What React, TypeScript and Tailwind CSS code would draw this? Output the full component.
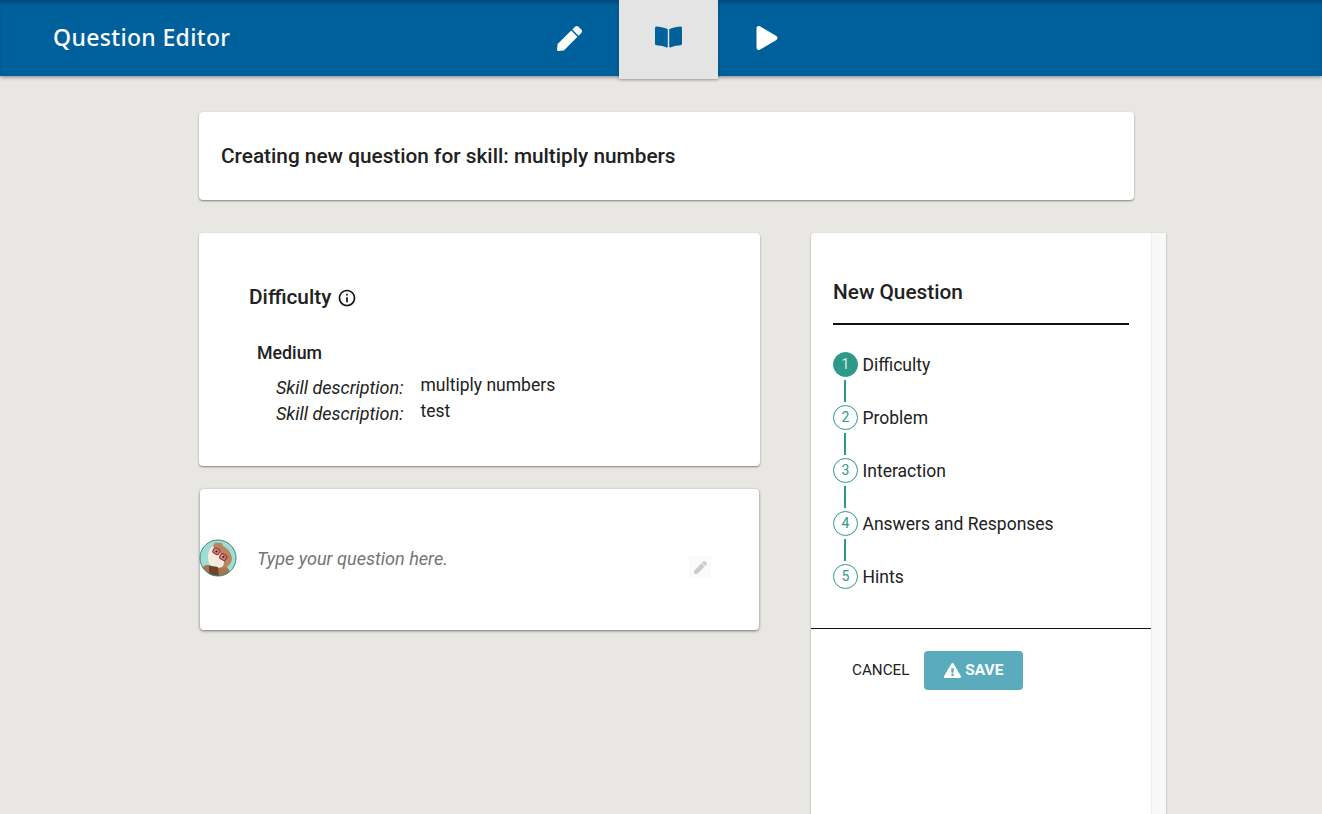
import React from "react";
import { FaPen, FaBookOpen, FaPlay, FaExclamationTriangle } from "react-icons/fa";
import { MdInfoOutline } from "react-icons/md";

const steps = ["Difficulty", "Problem", "Interaction", "Answers and Responses", "Hints"];

function Avatar() {
  return (
    <svg viewBox="0 0 38 38" className="absolute left-[-1px] top-[50px] w-[38px] h-[38px]">
      <defs>
        <clipPath id="c"><circle cx="19" cy="19" r="18" /></clipPath>
      </defs>
      <circle cx="19" cy="19" r="18" fill="#a3dcd2" />
      <g clipPath="url(#c)">
        <path d="M2 38 L3 29 C5 26 9 25 12 27 L26 27 C30 29 32 33 30 38 Z" fill="#a8734d" />
        <path d="M14 7 L16 3.5 L23 4 L24 7 C29 9 33 15 33 20 C32 26 28 29 23 29 L14 22 Z" fill="#b88660" />
        <path d="M13 8 C17 7 20 11 22 15 C25 19 26 23 24 27 C21 30 14 30 11 26 C8 21 8 12 13 8 Z" fill="#f5ebdf" />
        <path d="M10 26.5 L19 28 L20 38 L10 38 Z" fill="#6f4529" />
        <rect x="14" y="9.5" width="6.5" height="5.5" rx="1.5" fill="#c99a72" stroke="#a32a42" strokeWidth="1.2" transform="rotate(30 17.5 12.5)" />
        <rect x="21" y="15.5" width="6.5" height="5.5" rx="1.5" fill="#c99a72" stroke="#a32a42" strokeWidth="1.2" transform="rotate(30 24.5 18)" />
        <circle cx="17.5" cy="12.5" r="1.1" fill="#1d1d1d" />
        <circle cx="24.5" cy="18" r="1.1" fill="#1d1d1d" />
      </g>
      <circle cx="19" cy="19" r="18" fill="none" stroke="#2f8f83" strokeWidth="1" />
    </svg>
  );
}

export default function App() {
  return (
    <div className="h-[814px] overflow-hidden bg-[#e8e7e3] font-['Roboto',sans-serif] text-[#212121]">
      <header className="relative z-10 h-[76px] bg-[#00609c] shadow-[0_1px_4px_rgba(0,0,0,0.45),inset_0_4px_4px_-2px_rgba(0,0,0,0.3)] flex">
        <div className="w-[520px] pl-[53px] pt-[21px] font-['Noto_Sans',sans-serif] font-medium text-[23px] leading-[32px] tracking-[0.35px] text-white">
          Question Editor
        </div>
        <div className="w-[99px] flex items-center justify-center text-white">
          <FaPen className="w-[25px] h-[25px]" />
        </div>
        <div className="w-[99px] h-[79px] bg-[#e4e4e4] flex items-center justify-center pb-[5px] text-[#00609c] shadow-[0_1px_3px_rgba(0,0,0,0.3)]">
          <FaBookOpen className="w-[29px] h-[24px]" />
        </div>
        <div className="w-[99px] pr-[2px] flex items-center justify-center text-white">
          <FaPlay className="w-[24px] h-[24px]" />
        </div>
      </header>

      <main className="pl-[199px] pt-[36px]">
        <section className="w-[935px] h-[88px] bg-white rounded-[4px] shadow-[0_1px_2px_rgba(0,0,0,0.45)] pl-[22px] pt-[31px] text-[20.8px] leading-[26px] font-medium">
          Creating new question for skill: multiply numbers
        </section>

        <div className="flex mt-[33px]">
          <div className="w-[561px]">
            <section className="h-[233px] bg-white rounded-[4px] shadow-[0_1px_2px_rgba(0,0,0,0.45)] pl-[50px] pt-[51px]">
              <div className="flex items-center h-[26px]">
                <span className="text-[20.8px] leading-[26px] font-medium">Difficulty</span>
                <MdInfoOutline className="ml-[6px] mt-[2px] w-[20px] h-[20px] text-[#111]" />
              </div>
              <div className="ml-[8px] mt-[31px] text-[17.8px] leading-[24px] font-medium">Medium</div>
              <div className="ml-[27px] mt-[7px] text-[17.5px] leading-[26px] grid grid-cols-[144.5px_1fr] grid-rows-[26px_26px]">
                <em className="pt-[3px] text-[18px] h-[26px]">Skill description:</em>
                <span>multiply numbers</span>
                <em className="pt-[3px] text-[18px] h-[26px]">Skill description:</em>
                <span>test</span>
              </div>
            </section>

            <section className="relative mt-[23px] ml-[1px] w-[559px] h-[141px] bg-white rounded-[4px] shadow-[0_1px_3px_rgba(0,0,0,0.5)] flex pl-[57px] pt-[57px]">
              <Avatar />
              <em className="text-[18.1px] leading-[26px] text-[#757575]">Type your question here.</em>
              <div className="absolute left-[489px] top-[67px] w-[22px] h-[22px] bg-[#fafafa] flex items-center justify-center">
                <FaPen className="w-[13px] h-[13px] text-[#cccccc]" />
              </div>
            </section>
          </div>

          <aside className="ml-[51px] w-[355px] h-[600px] flex bg-white rounded-tl-[4px] shadow-[0_1px_2px_rgba(0,0,0,0.4)]">
            <div className="w-[340px]">
              <div className="mx-[22px] pt-[46px] h-[92px] border-b-2 border-[#111] text-[20.8px] leading-[26px] font-medium">
                New Question
              </div>
              <ol className="pl-[22px] pt-[27px] h-[304px] border-b border-[#111]">
                {steps.map((s, i) => (
                  <li key={s} className="flex flex-col">
                    <div className="flex items-center h-[25px]">
                      <span
                        className={
                          i === 0
                            ? "w-[25px] h-[25px] pb-[1px] rounded-full bg-[#2d9a89] border border-[#2d9a89] text-[#d9f0ec] text-[14px] flex items-center justify-center"
                            : "w-[25px] h-[25px] pb-[1px] rounded-full bg-white border border-[#2d9a89] text-[#2d9a89] text-[14px] flex items-center justify-center"
                        }
                      >
                        {i + 1}
                      </span>
                      <span className="ml-[4.5px] text-[17.5px] leading-[24px]">{s}</span>
                    </div>
                    {i < 4 && <div className="w-[2px] h-[22px] ml-[11px] my-[3px] bg-[#2d9a89]" />}
                  </li>
                ))}
              </ol>
              <div className="flex items-center pl-[41px] pt-[22px]">
                <span className="text-[15.2px] leading-[39px]">CANCEL</span>
                <button className="ml-[15px] w-[99px] h-[39px] rounded-[4px] bg-[#5aacbd] text-white text-[15.5px] font-bold flex items-center justify-center gap-[4px]">
                  <FaExclamationTriangle className="w-[17px] h-[17px]" />
                  SAVE
                </button>
              </div>
            </div>
            <div className="w-[15px] bg-[#f8f8f8] border-l border-[#eeeeee]" />
          </aside>
        </div>
      </main>
    </div>
  );
}
